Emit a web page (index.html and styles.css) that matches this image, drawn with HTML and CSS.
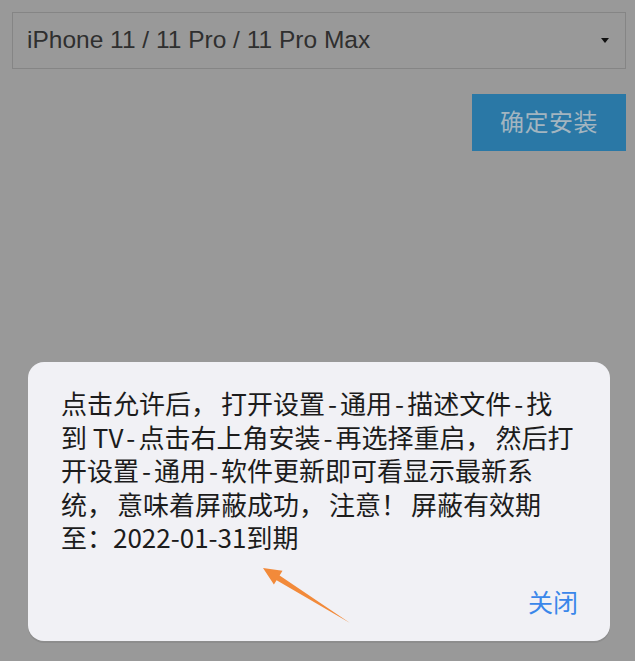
FILE: index.html
```html
<!DOCTYPE html>
<html lang="zh-CN">
<head>
<meta charset="utf-8">
<title>屏蔽更新</title>
<link rel="stylesheet" href="styles.css">
</head>
<body>
<div class="page">
  <div class="select">
    <span class="select-text">iPhone 11 / 11 Pro / 11 Pro Max</span>
    <span class="caret"></span>
  </div>
  <div class="actions">
    <div class="btn">确定安装</div>
  </div>
  <div class="spacer"></div>
  <div class="dialog">
    <div class="msg">
      <span class="line">点击允许后<span class="pc">，</span>打开设置<span class="hy">-</span>通用<span class="hy">-</span>描述文件<span class="hy">-</span>找</span>
      <span class="line">到 TV<span class="hy">-</span>点击右上角安装<span class="hy">-</span>再选择重启<span class="pc">，</span>然后打</span>
      <span class="line">开设置<span class="hy">-</span>通用<span class="hy">-</span>软件更新即可看显示最新系</span>
      <span class="line">统<span class="pc">，</span>意味着屏蔽成功<span class="pc">，</span>注意<span class="pc">！</span>屏蔽有效期</span>
      <span class="line">至：2022-01-31到期</span>
    </div>
    <div class="dialog-foot">
      <span class="close">关闭</span>
    </div>
  </div>
</div>
<svg class="annot" width="635" height="661" viewBox="0 0 635 661">
  <polygon points="263,568 282.5,570.8 279.6,575.4 350,623 276.6,580.2 273.9,584.4" fill="#f28a3a"/>
</svg>
</body>
</html>
```
FILE: styles.css
```css
html, body {
  margin: 0;
  padding: 0;
  background: #999999;
}
.page {
  width: 635px;
  height: 661px;
  display: flex;
  flex-direction: column;
  padding: 12px 0 0 0;
  box-sizing: border-box;
}
.select {
  margin: 0 9px 0 12px;
  height: 57px;
  border: 1px solid #858585;
  box-sizing: border-box;
  display: flex;
  align-items: center;
  justify-content: space-between;
  padding: 0 16px 0 14px;
}
.select-text {
  font-family: "Liberation Sans", Arial, sans-serif;
  font-size: 24.5px;
  color: #2f2f2f;
  padding-bottom: 2px;
}
.caret {
  width: 0;
  height: 0;
  border-left: 4px solid transparent;
  border-right: 4px solid transparent;
  border-top: 5px solid #111;
}
.actions {
  display: flex;
  justify-content: flex-end;
  margin: 25px 9px 0 0;
}
.btn {
  width: 154px;
  height: 57px;
  box-sizing: border-box;
  padding-bottom: 4px;
  background: #2a78a6;
  color: #a3b5c0;
  font-family: "Noto Sans CJK SC", sans-serif;
  font-size: 24px;
  display: flex;
  align-items: center;
  justify-content: center;
  letter-spacing: 0.5px;
}
.spacer {
  height: 211px;
}
.dialog {
  margin: 0 25px 0 28px;
  height: 279px;
  background: #f1f1f5;
  border-radius: 16px;
  box-sizing: border-box;
  padding: 24px 32px 20px 33px;
  display: flex;
  flex-direction: column;
  box-shadow: 0 2px 0 rgba(0,0,0,0.08);
}
.msg {
  display: flex;
  flex-direction: column;
  font-family: "Noto Sans CJK SC", sans-serif;
  font-size: 26px;
  line-height: 33.5px;
  color: #1c1c1c;
}
.line {
  white-space: nowrap;
}
.hy {
  margin: 0 3px;
}
.pc {
  margin-right: 4px;
}
.dialog-foot {
  display: flex;
  justify-content: flex-end;
  margin-top: auto;
}
.close {
  font-family: "Noto Sans CJK SC", sans-serif;
  font-size: 25px;
  line-height: 40px;
  color: #3a87ea;
}
.annot {
  position: absolute;
  top: 0;
  left: 0;
  pointer-events: none;
}
```
